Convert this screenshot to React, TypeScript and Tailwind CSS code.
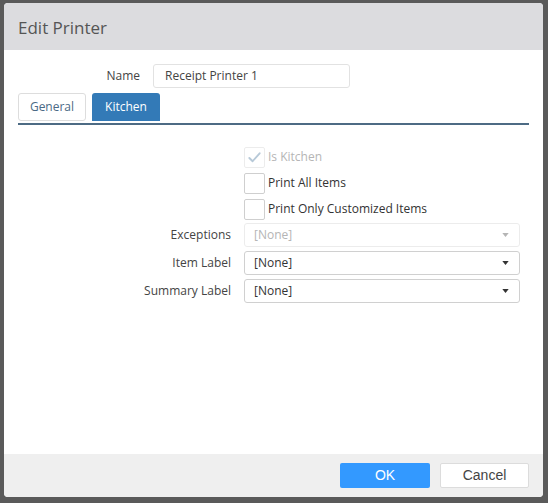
import React from 'react';

const FONT = { fontFamily: '"Open Sans", "Noto Sans", sans-serif' };

const Check = ({ checked, disabled, label }: { checked?: boolean; disabled?: boolean; label: string }) => (
  <div className="flex h-[26px] items-center">
    <div className={`flex h-[21px] w-[21px] items-center justify-center rounded-[2px] border ${disabled ? 'border-[#ececec]' : 'border-[#cfcfcf]'} bg-white`}>
      {checked && (
        <svg viewBox="0 0 16 16" className="h-[15px] w-[15px]">
          <path d="M2.5 8.5 L6 12 L13.5 3.5" fill="none" stroke="#b7c9d8" strokeWidth="2" strokeLinecap="round" strokeLinejoin="round" />
        </svg>
      )}
    </div>
    <span className={`ml-[3px] text-[12px] ${disabled ? 'text-[#b5b5b5]' : 'text-[#333]'}`}>{label}</span>
  </div>
);

const Select = ({ disabled }: { disabled?: boolean }) => (
  <div className={`flex h-[24px] w-[276px] items-center justify-between rounded-[3px] border ${disabled ? 'border-[#ececec]' : 'border-[#d0d0d0]'} bg-white pl-[9px] pr-[10px]`}>
    <span className={`text-[12px] ${disabled ? 'text-[#b5b5b5]' : 'text-[#333]'}`}>[None]</span>
    <svg viewBox="0 0 8 5" className="h-[4px] w-[7px]">
      <path d="M0 0 H8 L4 5 Z" fill={disabled ? '#b5b5b5' : '#333'} />
    </svg>
  </div>
);

const Row = ({ label, children }: { label: string; children: React.ReactNode }) => (
  <div className="flex items-center">
    <div className="w-[213px] text-right text-[12px] text-[#444]">{label}</div>
    <div className="ml-[13px]">{children}</div>
  </div>
);

export default function App() {
  return (
    <div className="h-[503px] w-[548px] bg-[#5a5a5a] pb-[6px] pl-[4px] pr-[5px] pt-[3px]" style={FONT}>
      <div className="flex h-full flex-col overflow-hidden rounded-[4px] bg-white">
        <div className="flex h-[47px] items-center bg-[#dcdcdf] pl-[14px] pt-[2px] text-[17px] text-[#555]">Edit Printer</div>

        <div className="flex-1 px-[14px]">
          <div className="mt-[14px] flex items-center">
            <div className="w-[122px] text-right text-[12px] text-[#444]">Name</div>
            <div className="ml-[13px] flex h-[24px] w-[197px] items-center rounded-[3px] border border-[#e2e2e2] pl-[11px] text-[12px] text-[#444]">Receipt Printer 1</div>
          </div>

          <div className="mt-[5px] flex gap-[6px]">
            <div className="flex h-[28px] w-[68px] items-center justify-center rounded-[3px] border border-[#ddd] text-[12px] text-[#4a6a85]">General</div>
            <div className="flex h-[28px] w-[68px] items-center justify-center rounded-t-[3px] bg-[#337ab7] text-[12px] text-white">Kitchen</div>
          </div>
          <div className="mt-[2px] h-[2px] bg-[#4d6b84]" />

          <div className="mt-[19px] flex flex-col">
            <div className="ml-[226px]">
              <Check checked disabled label="Is Kitchen" />
              <Check label="Print All Items" />
              <Check label="Print Only Customized Items" />
            </div>
            <div className="mt-[1px] flex flex-col gap-[4px]">
              <Row label="Exceptions"><Select disabled /></Row>
              <Row label="Item Label"><Select /></Row>
              <Row label="Summary Label"><Select /></Row>
            </div>
          </div>
        </div>

        <div className="flex h-[43px] items-start justify-end gap-[10px] bg-[#efefef] pr-[14px] pt-[9px]" style={{ fontFamily: '"Liberation Sans", Arial, sans-serif' }}>
          <button className="h-[25px] w-[90px] rounded-[2px] bg-[#3399ff] text-[14px] text-white">OK</button>
          <button className="h-[25px] w-[89px] rounded-[2px] border border-[#dcdcdc] bg-white text-[14px] text-[#444]">Cancel</button>
        </div>
      </div>
    </div>
  );
}
